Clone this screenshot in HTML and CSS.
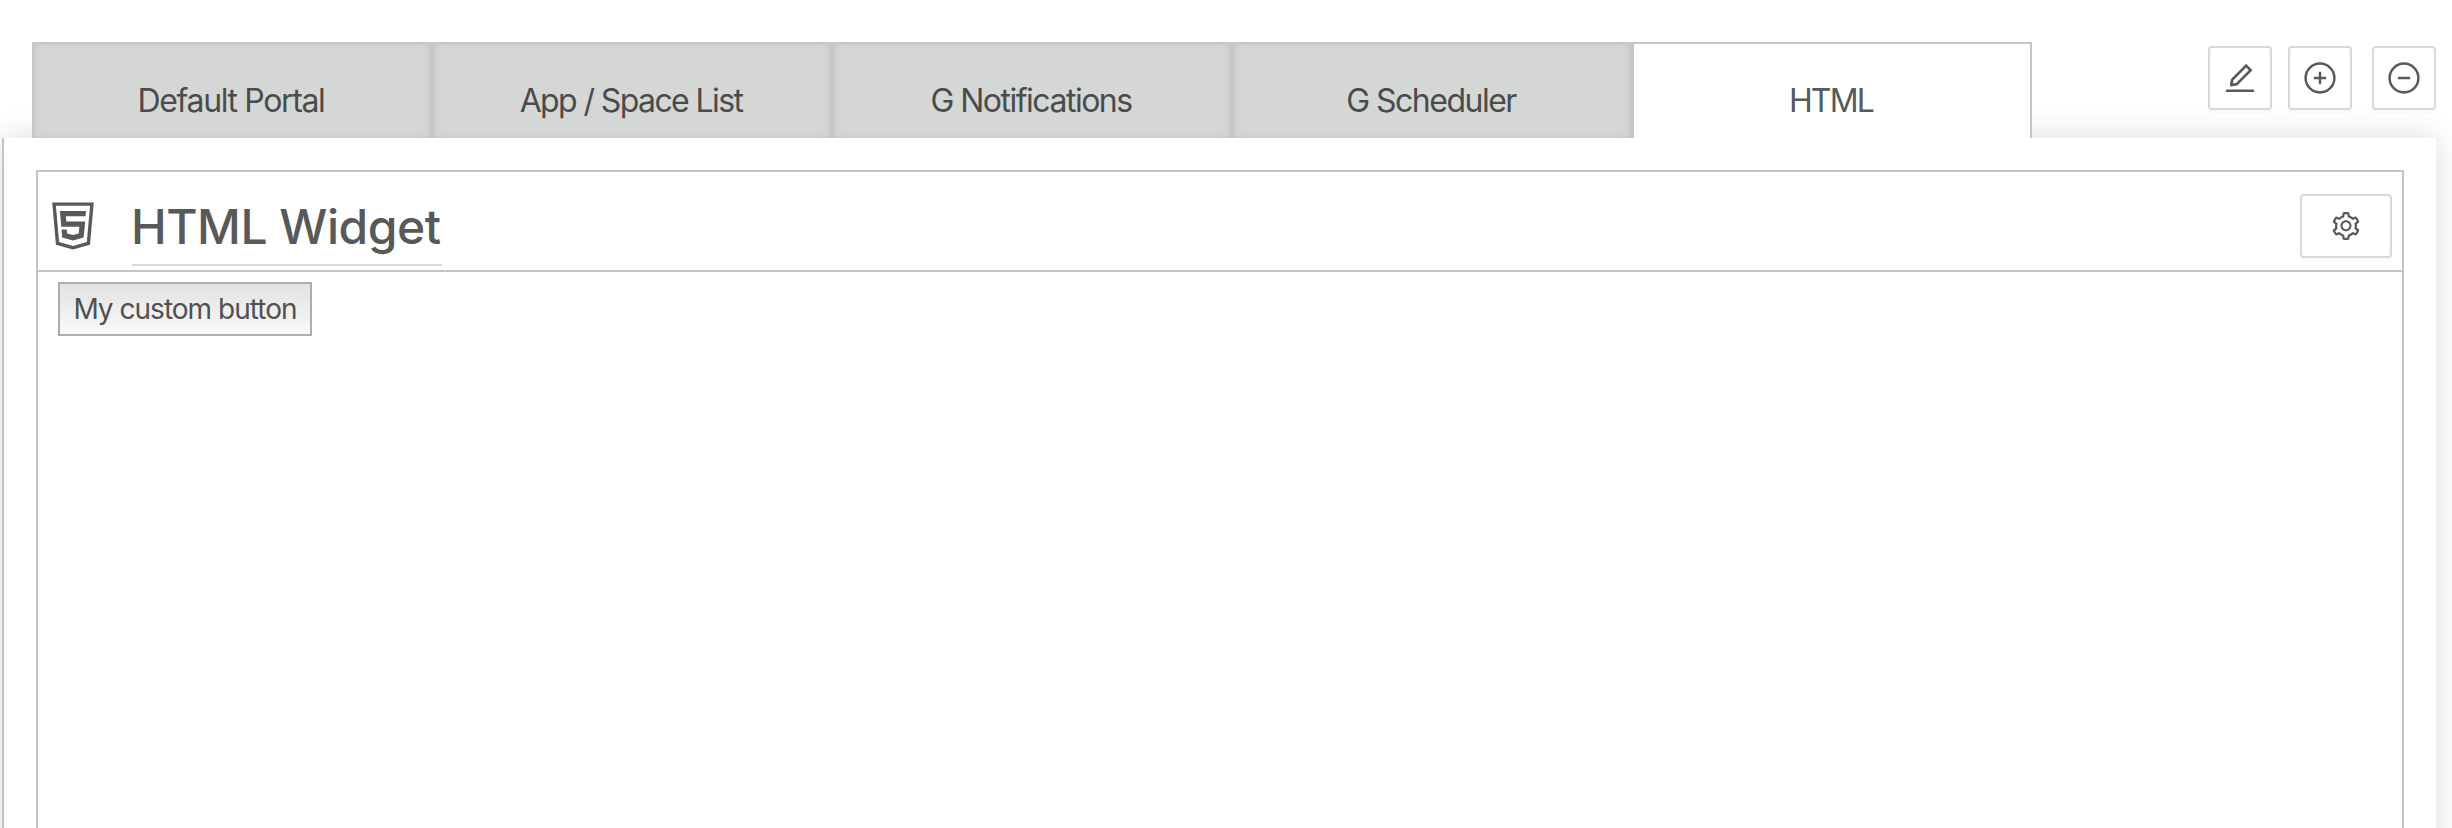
FILE: index.html
```html
<!DOCTYPE html>
<html lang="en">
<head>
<meta charset="utf-8">
<title>Portal</title>
<link rel="stylesheet" href="styles.css">
</head>
<body>
<div class="portal">
  <header class="topbar">
    <nav class="tabs">
      <a class="tab"><span class="t-default">Default Portal</span></a>
      <a class="tab"><span class="t-space">App / Space List</span></a>
      <a class="tab"><span class="t-notif">G Notifications</span></a>
      <a class="tab"><span class="t-sched">G Scheduler</span></a>
      <a class="tab active"><span class="t-html">HTML</span></a>
    </nav>
    <div class="actions">
      <button class="icon-btn" aria-label="Edit"><svg width="36" height="36" viewBox="0 0 1024 1024"><path d="M257.7 752c2 0 4-.2 6-.5L431.9 722c2-.4 3.9-1.3 5.3-2.8l423.9-423.9a9.96 9.96 0 000-14.1L694.9 114.9c-1.9-1.9-4.4-2.9-7.1-2.9s-5.2 1-7.1 2.9L256.8 538.8c-1.5 1.5-2.4 3.3-2.8 5.3l-29.5 168.2a33.5 33.5 0 009.4 29.8c6.6 6.4 14.9 9.9 23.8 9.9zm67.4-174.4L687.8 215l73.3 73.3-362.7 362.6-88.9 15.7 15.6-89zM880 836H144c-17.7 0-32 14.3-32 32v36c0 4.4 3.6 8 8 8h784c4.4 0 8-3.6 8-8v-36c0-17.7-14.3-32-32-32z"/></svg></button>
      <button class="icon-btn" aria-label="Add"><svg class="line" width="36" height="36" viewBox="0 0 1024 1024"><circle cx="512" cy="512" r="410"/><path d="M336 512h352M512 336v352"/></svg></button>
      <button class="icon-btn remove" aria-label="Remove"><svg class="line" width="36" height="36" viewBox="0 0 1024 1024"><circle cx="512" cy="512" r="410"/><path d="M336 512h352"/></svg></button>
    </div>
  </header>
  <main class="panel">
    <section class="widget">
      <div class="widget-head">
        <svg class="logo" width="58" height="58" viewBox="0 0 1024 1024"><path fill-rule="evenodd" d="M145 96l66 746.6L512 928l299.6-85.4L878.9 96H145zm610.9 700.6l-244.1 69.6-245.2-69.6-56.7-641.2h603.8l-57.8 641.2zM281 249l24 278h319l-11 118-102 28-103-28-7-73h-91l11 145 190 52 189-52 27-286H394l-8-90h348l8-92z"/></svg>
        <h1 class="title">HTML Widget</h1>
        <button class="icon-btn settings" aria-label="Settings"><svg width="32" height="32" viewBox="0 0 1024 1024"><path fill-rule="evenodd" d="M924.8 625.7l-65.5-56c3.1-19 4.7-38.4 4.7-57.8s-1.6-38.8-4.7-57.8l65.5-56a32.03 32.03 0 009.3-35.2l-.9-2.6a443.74 443.74 0 00-79.7-137.9l-1.8-2.1a32.12 32.12 0 00-35.1-9.5l-81.3 28.9c-30-24.6-63.5-44-99.7-57.6l-15.7-85a32.05 32.05 0 00-25.8-25.7l-2.7-.5c-52.1-9.4-106.9-9.4-159 0l-2.7.5a32.05 32.05 0 00-25.8 25.7l-15.8 85.4a351.86 351.86 0 00-99 57.4l-81.9-29.1a32 32 0 00-35.1 9.5l-1.8 2.1a446.02 446.02 0 00-79.7 137.9l-.9 2.6c-4.5 12.5-.8 26.5 9.3 35.2l66.3 56.6c-3.1 18.8-4.6 38-4.6 57.1 0 19.2 1.5 38.4 4.6 57.1L99 625.5a32.03 32.03 0 00-9.3 35.2l.9 2.6c18.1 50.4 44.9 96.9 79.7 137.9l1.8 2.1a32.12 32.12 0 0035.1 9.5l81.9-29.1c29.8 24.5 63.1 43.9 99 57.4l15.8 85.4a32.05 32.05 0 0025.8 25.7l2.7.5a449.4 449.4 0 00159 0l2.7-.5a32.05 32.05 0 0025.8-25.7l15.7-85a350 350 0 0099.7-57.6l81.3 28.9a32 32 0 0035.1-9.5l1.8-2.1c34.8-41.1 61.6-87.5 79.7-137.9l.9-2.6c4.5-12.3.8-26.3-9.3-35zM788.3 465.9c2.5 15.1 3.8 30.6 3.8 46.1s-1.3 31-3.8 46.1l-6.6 40.1 74.7 63.9a370.03 370.03 0 01-42.6 73.6L721 702.8l-31.4 25.8c-23.9 19.6-50.5 35-79.3 45.8l-38.1 14.3-17.9 97a377.5 377.5 0 01-85 0l-17.9-97.2-37.8-14.5c-28.5-10.8-55-26.2-78.7-45.7l-31.4-25.9-93.4 33.2c-17-22.9-31.2-47.6-42.6-73.6l75.5-64.5-6.5-40c-2.4-14.9-3.7-30.3-3.7-45.5 0-15.3 1.2-30.6 3.7-45.5l6.5-40-75.5-64.5c11.3-26.1 25.6-50.7 42.6-73.6l93.4 33.2 31.4-25.9c23.7-19.5 50.2-34.9 78.7-45.7l37.9-14.3 17.9-97.2c28.1-3.2 56.8-3.2 85 0l17.9 97 38.1 14.3c28.7 10.8 55.4 26.2 79.3 45.8l31.4 25.8 92.8-32.9c17 22.9 31.2 47.6 42.6 73.6L781.8 426l6.5 39.9zM512 326c-97.2 0-176 78.8-176 176s78.8 176 176 176 176-78.8 176-176-78.8-176-176-176zm79.2 255.2A111.6 111.6 0 01512 614c-29.9 0-58-11.7-79.2-32.8A111.6 111.6 0 01400 502c0-29.9 11.7-58 32.8-79.2C454 401.6 482.1 390 512 390c29.9 0 58 11.6 79.2 32.8A111.6 111.6 0 01624 502c0 29.9-11.7 58-32.8 79.2z"/></svg></button>
      </div>
      <div class="widget-body">
        <button class="custom-btn">My custom button</button>
      </div>
    </section>
  </main>
</div>
</body>
</html>
```
FILE: styles.css
```css
* { box-sizing: border-box; }
body {
  margin: 0;
  background: #fff;
  color: #595959;
  font-family: Inter, "Liberation Sans", sans-serif;
}
.portal {
  display: flex;
  flex-direction: column;
  height: 828px;
  padding: 42px 16px 0 2px;
  overflow: hidden;
}
.topbar {
  display: flex;
  justify-content: space-between;
  height: 96px;
  padding-left: 30px;
}
.tabs {
  display: flex;
  position: relative;
  z-index: 1;
}
.tab {
  display: flex;
  justify-content: center;
  width: 400px;
  height: 96px;
  padding: 37px 2px 0 0;
  border: 2px solid #c4c6c5;
  border-bottom: 0;
  background: #d5d7d6;
  box-shadow: inset 0 0 8px rgba(0, 0, 0, .08);
  color: #4a4c4b;
  font-size: 32px;
  line-height: 40px;
  white-space: nowrap;
}
.tab.active {
  background: #fff;
  box-shadow: none;
  color: #595959;
}
.tab span { letter-spacing: -1.5px; }
.tab .t-default { letter-spacing: -1.37px; }
.tab .t-space { letter-spacing: -1.6px; }
.tab .t-html { letter-spacing: -1.8px; }
.actions {
  display: flex;
  gap: 16px;
  padding-top: 4px;
}
.icon-btn {
  display: flex;
  align-items: center;
  justify-content: center;
  width: 64px;
  height: 64px;
  padding: 0;
  border: 2px solid #d9d9d9;
  border-radius: 4px;
  background: #fff;
  box-shadow: 0 4px 0 rgba(0, 0, 0, .016);
}
.icon-btn svg { fill: #595959; }
.icon-btn .line { fill: none; stroke: #595959; stroke-width: 70; }
.remove { margin-left: 4px; }
.panel {
  flex: 1;
  padding: 32px 32px 0;
  margin-bottom: -40px;
  border-left: 2px solid #c4c4c4;
  background: #fff;
  box-shadow: 0 0 30px rgba(0, 0, 0, .15);
}
.widget {
  height: 100%;
  border: 2px solid #c4c4c4;
}
.widget-head {
  display: flex;
  height: 100px;
  padding: 22px 10px 0 6px;
  border-bottom: 2px solid #c4c4c4;
}
.logo { margin-top: 3px; fill: #595959; }
.title {
  width: 310px;
  height: 74px;
  margin: -2px auto 0 30px;
  border-bottom: 2px solid #d9d9d9;
  font-size: 48px;
  font-weight: 450;
  line-height: 70px;
  letter-spacing: -.5px;
  text-indent: -1px;
  white-space: nowrap;
}
.settings { width: 92px; }
.widget-body { padding: 10px 20px; }
.custom-btn {
  width: 254px;
  height: 54px;
  padding: 0;
  border: 2px solid #adadad;
  background: linear-gradient(#e2e2e2, #f9f9f9);
  color: #515151;
  font-family: inherit;
  font-size: 28px;
  line-height: 48px;
  letter-spacing: -.98px;
  white-space: nowrap;
}
```
